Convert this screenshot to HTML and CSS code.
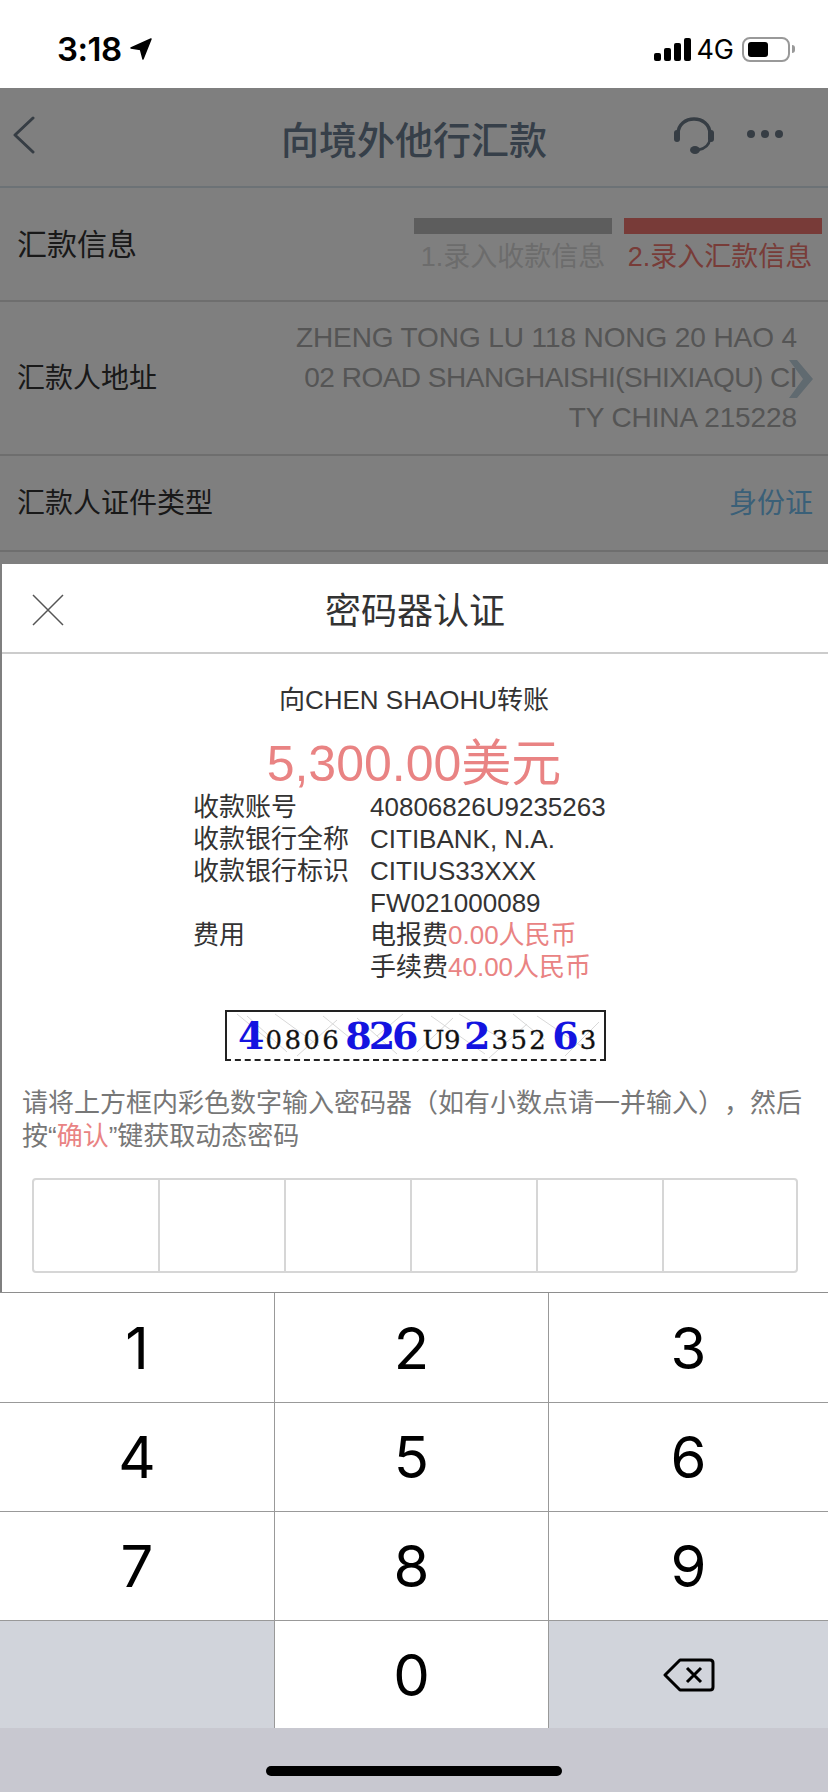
FILE: index.html
```html
<!DOCTYPE html>
<html lang="zh-CN">
<head>
    <meta charset="UTF-8">
    <meta name="viewport" content="width=device-width, initial-scale=1.0">
    <title>向境外他行汇款</title>
    <link rel="stylesheet" href="styles.css">
</head>
<body>
    <div class="status-bar">
        <div class="status-left">
            <span class="time">3:18</span>
            <svg class="loc-arrow" width="22" height="22" viewBox="0 0 22 22"><path d="M21 1 L1 10 L10.500 11.500 L13 21 Z" fill="#000" stroke="#000" stroke-width="1.500" stroke-linejoin="round"/></svg>
        </div>
        <div class="status-right">
            <span class="signal"><i class="b1"></i><i class="b2"></i><i class="b3"></i><i class="b4"></i></span>
            <span class="net">4G</span>
            <span class="battery"><span class="battery-level"></span></span>
            <span class="battery-cap"></span>
        </div>
    </div>

    <div class="screen">
        <div class="page">
            <header class="nav">
                <svg class="nav-back" width="24" height="40" viewBox="0 0 24 40"><path d="M21 2 L3 19 L21 36" fill="none" stroke="#6c7a88" stroke-width="3" stroke-linecap="round" stroke-linejoin="round"/></svg>
                <h1>向境外他行汇款</h1>
                <svg class="nav-service" width="40" height="38" viewBox="0 0 40 38">
                    <path d="M4 17 C4 -3 36 -3 36 17" fill="none" stroke="#6c7a88" stroke-width="3.500"/>
                    <rect x="0" y="13" width="6" height="12" rx="3" fill="#6c7a88"/>
                    <rect x="34" y="13" width="6" height="12" rx="3" fill="#6c7a88"/>
                    <path d="M36 22 C35 29 30 32 24 33" fill="none" stroke="#6c7a88" stroke-width="2.500"/>
                    <ellipse cx="21" cy="33" rx="5" ry="4" fill="#6c7a88"/>
                </svg>
                <span class="nav-more"><i></i><i></i><i></i></span>
            </header>

            <div class="row row-info">
                <span class="row-label row-label-large">汇款信息</span>
                <div class="steps">
                    <div class="step">
                        <div class="step-bar"></div>
                        <div class="step-text">1.录入收款信息</div>
                    </div>
                    <div class="step step-active">
                        <div class="step-bar"></div>
                        <div class="step-text">2.录入汇款信息</div>
                    </div>
                </div>
            </div>
            <div class="row row-address">
                <span class="row-label">汇款人地址</span>
                <div class="address">ZHENG TONG LU 118 NONG 20 HAO 4<br><span class="address-tight">02 ROAD SHANGHAISHI(SHIXIAQU) CI</span><br>TY CHINA 215228</div>
                <svg class="row-arrow" width="24" height="38" viewBox="0 0 24 38"><path d="M0 0 H8 L24 19 L8 38 H0 L14 19 Z" fill="#c0d4e0"/></svg>
            </div>
            <div class="row row-id">
                <span class="row-label">汇款人证件类型</span>
                <span class="row-link">身份证</span>
            </div>
        </div>

        <div class="backdrop"></div>

        <div class="modal">
            <div class="modal-head">
                <svg class="modal-close" width="32" height="32" viewBox="0 0 32 32"><path d="M1 1 L31 31 M31 1 L1 31" stroke="#555" stroke-width="1.500"/></svg>
                <h2>密码器认证</h2>
            </div>
            <p class="payee">向CHEN SHAOHU转账</p>
            <p class="amount">5,300.00美元</p>
            <div class="details">
                <span>收款账号</span><span>40806826U9235263</span>
                <span>收款银行全称</span><span>CITIBANK, N.A.</span>
                <span>收款银行标识</span><span>CITIUS33XXX</span>
                <span></span><span>FW021000089</span>
                <span>费用</span><span>电报费<em>0.00人民币</em></span>
                <span></span><span>手续费<em>40.00人民币</em></span>
            </div>
            <div class="captcha">
                <svg class="captcha-noise" width="377" height="48" viewBox="0 0 377 48">
                    <path d="M10 2 L44 30 M20 4 L60 40 M48 2 L92 34 M70 44 L110 8 M96 4 L128 30 M130 6 L170 42 M176 2 L150 24 M190 40 L226 6 M204 4 L258 42 M232 2 L280 30 M262 46 L300 12 M286 2 L318 28 M310 4 L360 38 M338 44 L372 10" stroke="#d8d8d8" stroke-width="1" fill="none"/>
                </svg>
                <span class="cap-big">4</span><span class="cap-small">0806</span><span class="cap-big">826</span><span class="cap-small cap-tight">U9</span><span class="cap-big">2</span><span class="cap-small">352</span><span class="cap-big">6</span><span class="cap-small">3</span>
            </div>
            <p class="hint">请将上方框内彩色数字输入密码器（如有小数点请一并输入），然后按“<em>确认</em>”键获取动态密码</p>
            <div class="code-boxes">
                <div></div><div></div><div></div><div></div><div></div><div></div>
            </div>
        </div>
    </div>

    <div class="keypad">
        <div class="key">1</div>
        <div class="key">2</div>
        <div class="key">3</div>
        <div class="key">4</div>
        <div class="key">5</div>
        <div class="key">6</div>
        <div class="key">7</div>
        <div class="key">8</div>
        <div class="key">9</div>
        <div class="key key-blank"></div>
        <div class="key">0</div>
        <div class="key key-blank">
            <svg width="52" height="34" viewBox="0 0 52 34"><path d="M17 2 H47 Q50 2 50 5 V29 Q50 32 47 32 H17 L2 17 Z" fill="none" stroke="#000" stroke-width="3" stroke-linejoin="round"/><path d="M24 10 L38 24 M38 10 L24 24" stroke="#000" stroke-width="3"/></svg>
        </div>
    </div>
    <div class="home-area"><div class="home-bar"></div></div>
</body>
</html>
```

FILE: styles.css
```css
* {
    box-sizing: border-box;
}
body {
    margin: 0;
    width: 828px;
    height: 1792px;
    overflow: hidden;
    background: #fff;
    font-family: "Liberation Sans", "Noto Sans CJK SC", sans-serif;
    color: #333;
}
h1, h2, p {
    margin: 0;
    font-weight: normal;
}
em {
    font-style: normal;
    color: #e98383;
}

/* status bar */
.status-bar {
    height: 88px;
    display: flex;
    justify-content: space-between;
    align-items: center;
    padding: 10px 33px 0 57px;
    color: #000;
}
.status-left {
    display: flex;
    align-items: center;
    gap: 8px;
}
.time {
    font-family: Inter, sans-serif;
    font-size: 33px;
    font-weight: 600;
    letter-spacing: -0.5px;
}
.status-right {
    display: flex;
    align-items: center;
}
.signal {
    display: flex;
    align-items: flex-end;
    gap: 3px;
    height: 23px;
}
.signal i {
    width: 7px;
    background: #000;
    border-radius: 2px;
}
.signal .b1 { height: 8px; }
.signal .b2 { height: 13px; }
.signal .b3 { height: 18px; }
.signal .b4 { height: 23px; }
.net {
    font-family: Inter, sans-serif;
    font-size: 27px;
    margin: 0 8px 0 5px;
}
.battery {
    width: 48px;
    height: 25px;
    border: 2px solid #999;
    border-radius: 8px;
    padding: 3px 4px;
    display: block;
}
.battery-level {
    display: block;
    width: 20px;
    height: 15px;
    background: #000;
    border-radius: 3px;
}
.battery-cap {
    width: 3px;
    height: 8px;
    margin-left: 2px;
    background: #999;
    border-radius: 0 3px 3px 0;
}

/* page under the dialog */
.screen {
    position: relative;
    height: 1204px;
    overflow: hidden;
}
.page {
    height: 100%;
    background: #fff;
}
.backdrop {
    position: absolute;
    inset: 0;
    background: rgba(0, 0, 0, 0.5);
}
.nav {
    height: 100px;
    border-bottom: 2px solid #d8e4ec;
    display: flex;
    align-items: center;
    position: relative;
}
.nav h1 {
    position: absolute;
    left: 0;
    right: 0;
    top: 28px;
    text-align: center;
    font-size: 38px;
    line-height: 50px;
    font-weight: 500;
    color: #6c7f92;
}
.nav-back {
    margin: -2px 0 0 12px;
}
.nav-service {
    margin: -2px 0 0 638px;
}
.nav-more {
    display: flex;
    gap: 6px;
    margin: -6px 0 0 33px;
}
.nav-more i {
    width: 8px;
    height: 8px;
    border-radius: 50%;
    background: #6c7a88;
}
.row {
    display: flex;
    align-items: center;
    justify-content: space-between;
    padding: 0 17px;
    border-bottom: 2px solid #ddd;
    position: relative;
}
.row-label {
    font-size: 28px;
    color: #333;
    margin-bottom: 4px;
}
.row-label-large {
    font-size: 30px;
}
.row-info {
    height: 114px;
    padding-right: 6px;
}
.steps {
    display: flex;
    gap: 12px;
    align-self: flex-start;
    margin-top: 30px;
}
.step {
    width: 198px;
    text-align: center;
}
.step-bar {
    height: 16px;
    background: #bbb;
}
.step-text {
    font-size: 27px;
    line-height: 46px;
    color: #d8d8d8;
    white-space: nowrap;
}
.step-active .step-bar {
    background: #f07670;
}
.step-active .step-text {
    color: #f07870;
    padding-right: 6px;
}
.row-address {
    height: 154px;
    padding-right: 31px;
}
.address {
    font-size: 28px;
    line-height: 40px;
    color: #aaa;
    text-align: right;
    white-space: nowrap;
    letter-spacing: -0.1px;
}
.address-tight {
    letter-spacing: -0.5px;
}
.row-arrow {
    position: absolute;
    right: 15px;
    top: 58px;
}
.row-id {
    height: 96px;
    padding-right: 15px;
}
.row-link {
    font-size: 28px;
    color: #74c0f0;
    margin-bottom: 4px;
}

/* dialog */
.modal {
    position: absolute;
    left: 2px;
    right: 0;
    bottom: 0;
    height: 728px;
    background: #fff;
}
.modal-head {
    height: 90px;
    border-bottom: 2px solid #ccc;
    display: flex;
    align-items: center;
    justify-content: center;
    position: relative;
}
.modal-head h2 {
    font-size: 36px;
    color: #333;
}
.modal-close {
    position: absolute;
    left: 30px;
    top: 30px;
}
.payee {
    margin-top: 30px;
    font-size: 26px;
    line-height: 32px;
    text-align: center;
    color: #333;
    margin-left: -2px;
}
.amount {
    margin-top: 21px;
    font-size: 50px;
    line-height: 54px;
    text-align: center;
    color: #e98383;
    margin-left: -2px;
}
.details {
    display: grid;
    grid-template-columns: 177px 1fr;
    margin-left: 191px;
    font-size: 26px;
    line-height: 32px;
    color: #333;
}
.captcha {
    position: relative;
    width: 381px;
    height: 51px;
    margin: 27px 0 0 223px;
    border: 2px solid #222;
    border-bottom-style: dashed;
    display: flex;
    align-items: baseline;
    padding: 2px 0 0 11px;
    font-family: "DejaVu Serif", serif;
    color: #111;
    overflow: hidden;
}
.captcha-noise {
    position: absolute;
    left: 0;
    top: 0;
}
.cap-big,
.cap-small {
    position: relative;
    margin-right: 4px;
}
.cap-big {
    font-size: 38px;
    line-height: 44px;
    font-weight: bold;
    color: #1414e0;
    letter-spacing: -3px;
}
.cap-small {
    font-size: 26px;
    letter-spacing: 2.400px;
    -webkit-text-stroke: 0.3px #111;
}
.cap-tight {
    letter-spacing: -0.500px;
    margin-left: 3px;
}
.hint {
    margin: 26px 0 0 20px;
    width: 786px;
    font-size: 26px;
    line-height: 33px;
    color: #777;
    text-spacing-trim: space-all;
}
.code-boxes {
    width: 766px;
    height: 95px;
    margin: 25px 0 0 30px;
    border: 2px solid #d6d6d6;
    border-radius: 4px;
    display: flex;
}
.code-boxes div {
    width: 126px;
    border-right: 2px solid #d6d6d6;
}
.code-boxes div:last-child {
    flex: 1;
    border-right: none;
}

/* number pad */
.keypad {
    height: 436px;
    display: grid;
    grid-template-columns: 275px 274px 279px;
    grid-template-rows: 110px 109px 109px 107px;
    border-top: 1px solid #8e8e8e;
}
.key {
    display: flex;
    align-items: center;
    justify-content: center;
    font-family: Inter, sans-serif;
    font-size: 58px;
    color: #000;
    border-right: 1px solid #999;
    border-bottom: 1px solid #999;
    background: #fff;
}
.key:nth-child(3n) {
    border-right: none;
}
.key:nth-last-child(-n+3) {
    border-bottom: none;
}
.key-blank {
    background: #d1d4db;
}
.home-area {
    height: 64px;
    background: #c8c8d0;
    padding-top: 38px;
}
.home-bar {
    width: 296px;
    height: 10px;
    margin: 0 auto;
    border-radius: 5px;
    background: #000;
}
```
